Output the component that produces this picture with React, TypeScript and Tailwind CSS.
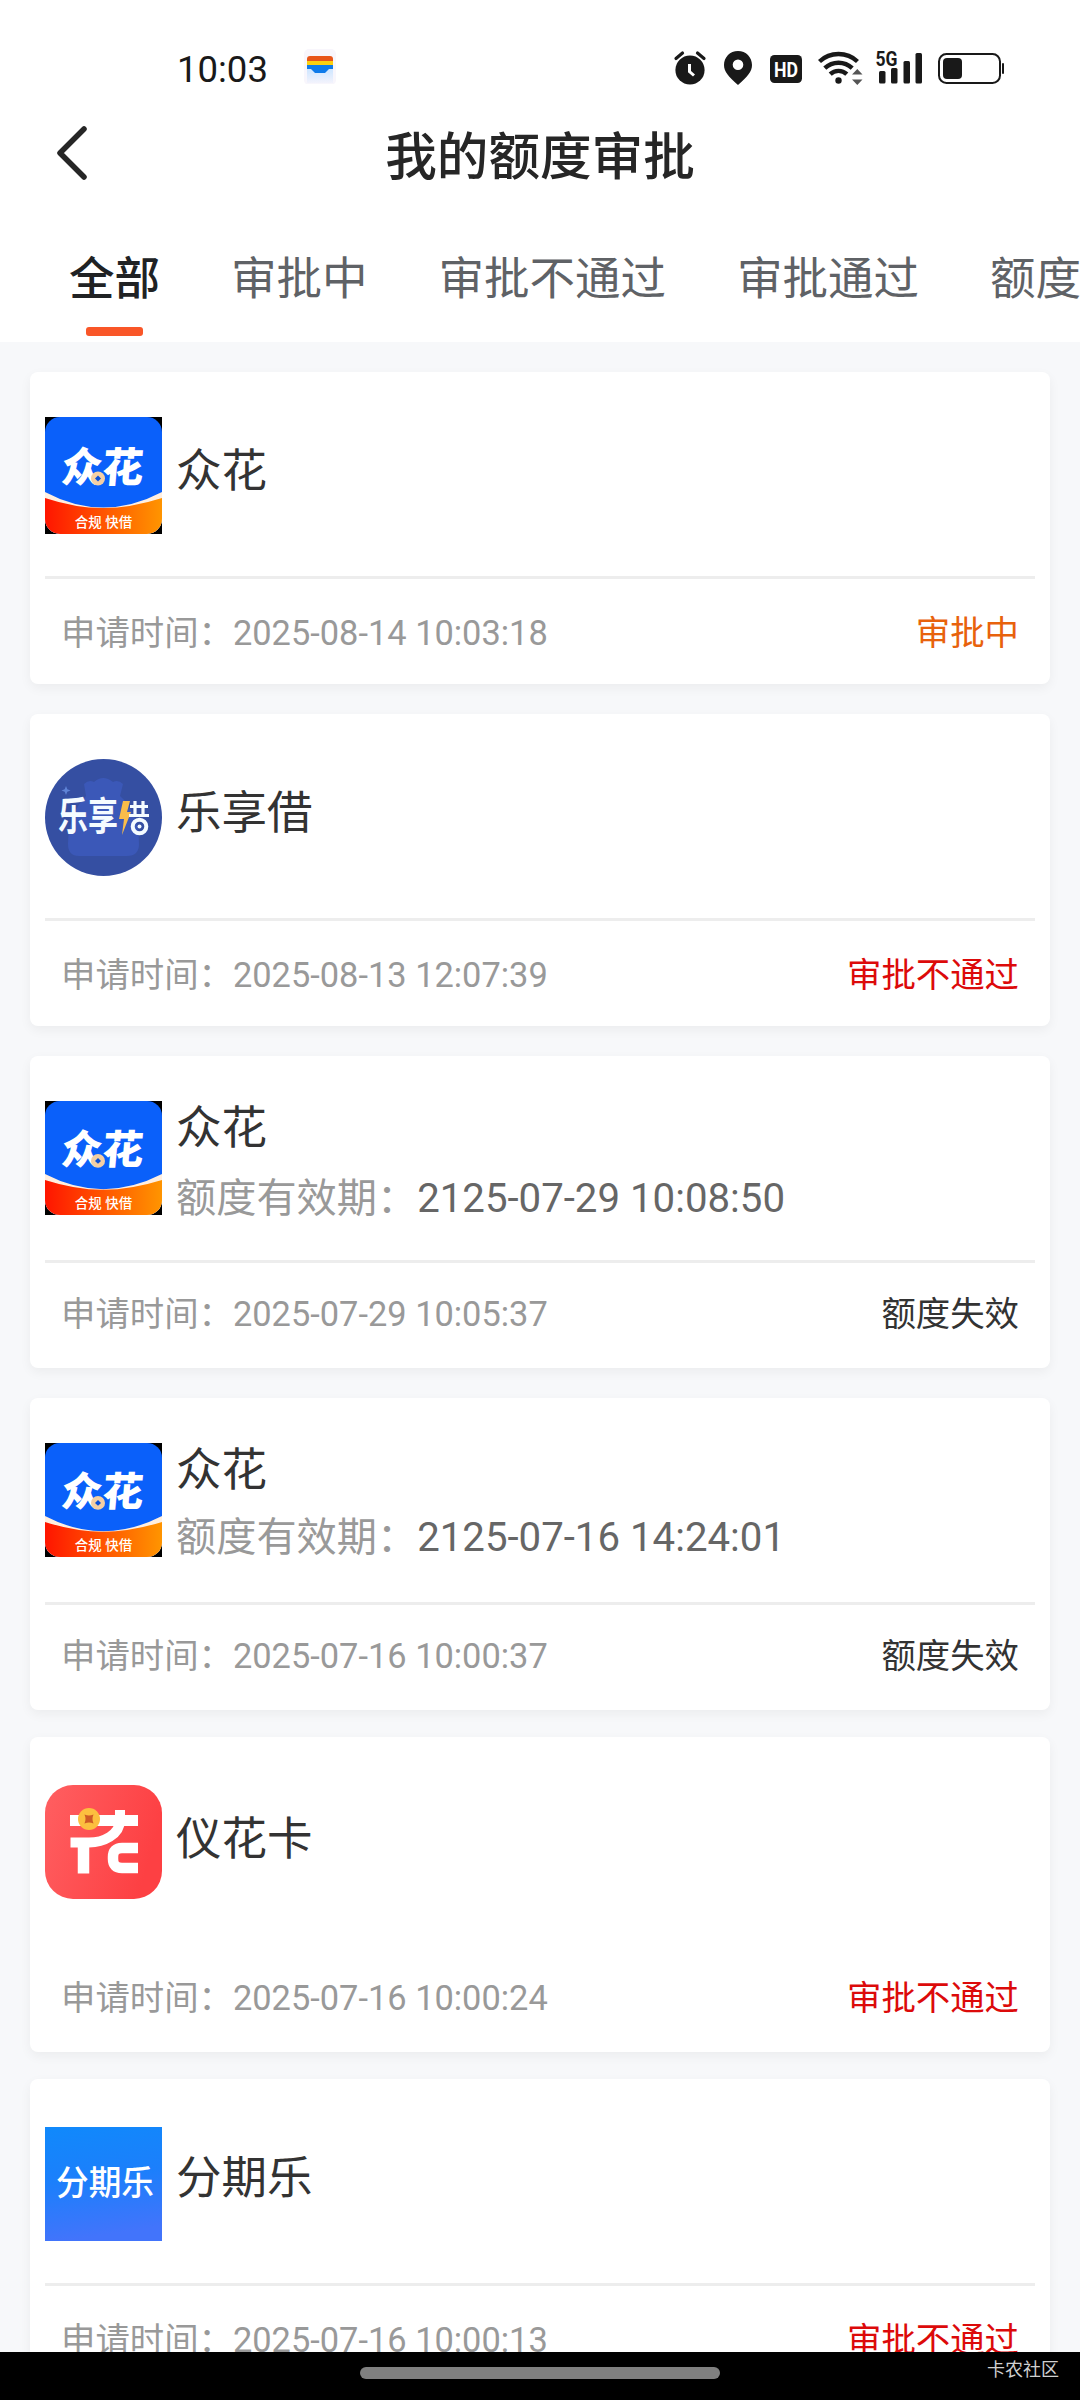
import React from 'react';
import { clsx } from 'clsx';

type LogoKind = 'zhonghua' | 'lexiang' | 'yihua' | 'fenqile';

interface Application {
  name: string;
  logo: LogoKind;
  validUntil?: string;
  appliedAt: string;
  status: string;
  statusClass: string;
  cardClass: string;
  logoClass: string;
  textClass: string;
  validClass?: string;
  dividerClass: string;
  footerClass: string;
}

const tabs = ['全部', '审批中', '审批不通过', '审批通过', '额度失效'];

const applications: Application[] = [
  {
    name: '众花',
    logo: 'zhonghua',
    appliedAt: '2025-08-14 10:03:18',
    status: '审批中',
    statusClass: 'text-[#e8620c]',
    cardClass: 'h-[312px]',
    logoClass: 'mt-[45px] h-[117px]',
    textClass: 'pt-[70px]',
    dividerClass: 'bg-[#ededed]',
    footerClass: 'pt-[29px]',
  },
  {
    name: '乐享借',
    logo: 'lexiang',
    appliedAt: '2025-08-13 12:07:39',
    status: '审批不通过',
    statusClass: 'text-[#dc0a0a]',
    cardClass: 'mt-[30px] h-[312px]',
    logoClass: 'mt-[45px] h-[117px]',
    textClass: 'pt-[70px]',
    dividerClass: 'bg-[#ededed]',
    footerClass: 'pt-[29px]',
  },
  {
    name: '众花',
    logo: 'zhonghua',
    validUntil: '2125-07-29 10:08:50',
    appliedAt: '2025-07-29 10:05:37',
    status: '额度失效',
    statusClass: 'text-[#333333]',
    cardClass: 'mt-[30px] h-[312px]',
    logoClass: 'mt-[45px] h-[114px]',
    textClass: 'pt-[43px]',
    validClass: 'mt-[15px]',
    dividerClass: 'bg-[#ededed]',
    footerClass: 'pt-[26px]',
  },
  {
    name: '众花',
    logo: 'zhonghua',
    validUntil: '2125-07-16 14:24:01',
    appliedAt: '2025-07-16 10:00:37',
    status: '额度失效',
    statusClass: 'text-[#333333]',
    cardClass: 'mt-[30px] h-[312px]',
    logoClass: 'mt-[45px] h-[114px]',
    textClass: 'pt-[43px]',
    validClass: 'mt-[12px]',
    dividerClass: 'bg-[#ededed]',
    footerClass: 'pt-[26px]',
  },
  {
    name: '仪花卡',
    logo: 'yihua',
    appliedAt: '2025-07-16 10:00:24',
    status: '审批不通过',
    statusClass: 'text-[#dc0a0a]',
    cardClass: 'mt-[27px] h-[315px] pt-[3px]',
    logoClass: 'mt-[45px] h-[114px]',
    textClass: 'pt-[70px]',
    dividerClass: 'bg-transparent',
    footerClass: 'pt-[26px]',
  },
  {
    name: '分期乐',
    logo: 'fenqile',
    appliedAt: '2025-07-16 10:00:13',
    status: '审批不通过',
    statusClass: 'text-[#dc0a0a]',
    cardClass: 'mt-[27px] h-[315px]',
    logoClass: 'mt-[48px] h-[114px]',
    textClass: 'pt-[70px]',
    dividerClass: 'bg-[#ededed]',
    footerClass: 'pt-[29px]',
  },
];

const StatusIcons = () => (
  <svg width="334" height="40" viewBox="0 0 334 40" fill="#191919">
    {/* Alarm */}
    <circle cx="20" cy="22" r="14.6" />
    <path d="M6 10.5 12.5 5M34 10.5 27.5 5" stroke="#191919" strokeWidth="3.2" strokeLinecap="round" />
    <path d="M19.5 16v7.5l4.5 4" fill="none" stroke="#fff" strokeWidth="3" />
    {/* Location */}
    <path
      fillRule="evenodd"
      d="M68 3c-8 0-14 6.2-14 14 0 6.5 4.5 11.5 14 20 9.5-8.5 14-13.5 14-20 0-7.800-6-14-14-14zm0 8.500a5.300 5.300 0 1 1 0 10.600 5.300 5.300 0 0 1 0-10.600z"
    />
    {/* HD */}
    <rect x="100" y="7" width="32" height="28" rx="4.5" />
    <text x="116" y="28.5" fill="#fff" fontSize="21" fontWeight="700" textAnchor="middle" textLength="24" lengthAdjust="spacingAndGlyphs">HD</text>
    {/* Wifi */}
    <g fill="none" stroke="#191919" strokeWidth="4.4">
      <path d="M149.5 13.500a28 28 0 0 1 38 0" />
      <path d="M154.8 20.200a20 20 0 0 1 27.400 0" />
      <path d="M160.2 26.200a12 12 0 0 1 16.600 0" />
    </g>
    <circle cx="168.5" cy="32.5" r="3.2" />
    <path d="M182 26.500h10.500l-5.200-5.500zM182 31.500h10.500l-5.200 5.500z" fill="#555" />
    {/* Signal */}
    <text x="205.5" y="18" fontSize="20.5" fontWeight="700" textLength="22" lengthAdjust="spacingAndGlyphs">5G</text>
    <rect x="209" y="23" width="6.5" height="12.5" rx="1.5" />
    <rect x="221" y="20" width="6.5" height="15.5" rx="1.5" />
    <rect x="233.5" y="13" width="6.5" height="22.5" rx="1.5" />
    <rect x="245.5" y="5" width="6.5" height="30.5" rx="1.5" />
    {/* Battery */}
    <rect x="269" y="6" width="61" height="29" rx="7.5" fill="none" stroke="#191919" strokeWidth="2" />
    <rect x="273" y="10" width="19" height="21" rx="4" />
    <rect x="332" y="15" width="2" height="11" rx="1" />
  </svg>
);

const WalletIcon = () => (
  <svg width="34" height="36" viewBox="0 0 34 36">
    <defs>
      <linearGradient id="wallet" x1="0" y1="0" x2="0" y2="1">
        <stop offset="0.3" stopColor="#d3e8ff" />
        <stop offset="1" stopColor="#f3f3fc" />
      </linearGradient>
    </defs>
    <rect x="1" y="1" width="32" height="36" rx="5" fill="#f8f6fc" />
    <path d="M4 18h26v17H4z" fill="url(#wallet)" />
    <path d="M4 13v-2a3 3 0 0 1 3-3h20a3 3 0 0 1 3 3v2z" fill="#e8561a" />
    <path d="M4 13h26v4H4z" fill="#fdd00f" />
    <path d="M4 17h26v4h-4l-4 4H12l-4-4H4z" fill="#0f7bea" />
  </svg>
);

const ZhonghuaLogo = () => (
  <svg viewBox="0 0 117 117" preserveAspectRatio="none" className="h-full w-full">
    <defs>
      <linearGradient id="zh-band" x1="0" x2="1" y1="0" y2="0">
        <stop offset="0" stopColor="#ff1500" />
        <stop offset="1" stopColor="#ff9500" />
      </linearGradient>
      <clipPath id="zh-clip">
        <rect width="117" height="117" rx="15" />
      </clipPath>
    </defs>
    <rect width="117" height="117" fill="#000" />
    <g clipPath="url(#zh-clip)">
      <rect width="117" height="117" fill="#0a60fa" />
      <path d="M0 75Q58 106 117 75V117H0z" fill="#ffefe0" />
      <path d="M0 81Q30 91 58 91T117 81V117H0z" fill="url(#zh-band)" />
    </g>
    <text x="57" y="65" fontSize="41" fontWeight="900" fill="#fff" textAnchor="middle" textLength="82" lengthAdjust="spacingAndGlyphs" transform="skewX(-5) translate(5 0)">众花</text>
    <circle cx="53" cy="61.5" r="7" fill="#f3cfa4" />
    <path d="M53 58.500l3 3-3 3-3-3z" fill="#0a50d8" />
    <text x="58.5" y="110" fontSize="13.5" fontWeight="500" fill="#fff" textAnchor="middle">合规 快借</text>
  </svg>
);

const LexiangLogo = () => (
  <svg viewBox="0 0 117 117" preserveAspectRatio="none" className="h-full w-full">
    <circle cx="58.5" cy="58.5" r="58.5" fill="#354fa2" />
    <path d="M39 25q5-5 10-2 9-8 19 0 5-3 10 2l-3 12c14 12 19 30 19 48q0 12-12 12H34q-11 0-11-12c0-18 6-36 18-48z" fill="#3b58b8" />
    <path d="M21 27l1.300 3.200 3.200 1.300-3.200 1.300L21 36l-1.300-3.200-3.200-1.300 3.200-1.300z" fill="#5f83d6" />
    <text x="13" y="54.5" fontSize="30" fontWeight="700" fill="#f4fbff" textLength="60" lengthAdjust="spacingAndGlyphs" transform="scale(1 1.3)">乐享</text>
    <path d="M78 42h7l-3 11h4L77 76l2-16h-5z" fill="#f9bd4a" />
    {/* Right half of the stylised 借 */}
    <g stroke="#f4fbff" fill="none">
      <path d="M85 47.500h18M84 56.500h20M90 42v15M98 42v15" strokeWidth="3.2" />
      <circle cx="94.5" cy="67.5" r="6.8" strokeWidth="4" />
    </g>
    <circle cx="94.5" cy="67.5" r="2" fill="#f4fbff" />
  </svg>
);

const YihuaLogo = () => (
  <svg viewBox="0 0 117 114" preserveAspectRatio="none" className="h-full w-full">
    <defs>
      <linearGradient id="yh-bg" x1="0" x2="1" y1="0" y2="0.3">
        <stop offset="0" stopColor="#ff5f61" />
        <stop offset="1" stopColor="#fd4043" />
      </linearGradient>
    </defs>
    <rect width="117" height="114" rx="28" fill="url(#yh-bg)" />
    <g fill="none" stroke="#fff">
      <path d="M25 35.500H93" strokeWidth="11" />
      <path d="M75 25v10C75 50 58 57.500 44 57.500H25.500" strokeWidth="10" />
      <path d="M38.500 58v30.500" strokeWidth="11.5" />
      <path d="M93 63H77q-9 0-9 9v2q0 9 9 9h16" strokeWidth="10.5" />
    </g>
    <circle cx="44" cy="34" r="11" fill="#fcbf3f" />
    <path d="M39.500 29.500q4.500 2 9 0-2 4.500 0 9-4.500-2-9 0 2-4.500 0-9z" fill="#ce5a25" />
  </svg>
);

const FenqileLogo = () => (
  <svg viewBox="0 0 117 114" preserveAspectRatio="none" className="h-full w-full">
    <defs>
      <linearGradient id="fq-bg" x1="0" x2="0.15" y1="0" y2="1">
        <stop offset="0" stopColor="#1089fb" />
        <stop offset="0.5" stopColor="#1c7ffb" />
        <stop offset="1" stopColor="#4274fb" />
      </linearGradient>
    </defs>
    <rect width="117" height="114" fill="url(#fq-bg)" />
    <path d="M51 47v9h6" fill="none" stroke="#b08be0" strokeWidth="3.5" />
    <text x="11" y="68" fontSize="34" fontWeight="500" fill="#fff" textLength="98" lengthAdjust="spacingAndGlyphs">分期乐</text>
  </svg>
);

const logos: Record<LogoKind, () => React.JSX.Element> = {
  zhonghua: ZhonghuaLogo,
  lexiang: LexiangLogo,
  yihua: YihuaLogo,
  fenqile: FenqileLogo,
};

const ApplicationCard = ({ item }: { item: Application }) => {
  const Logo = logos[item.logo];

  return (
    <div className={clsx('shrink-0 rounded-lg bg-white px-[15px] shadow-[0_4px_12px_rgba(0,0,0,0.05)]', item.cardClass)}>
      <div className="flex h-[204px] gap-[14px]">
        <div className={clsx('w-[117px] shrink-0', item.logoClass)}>
          <Logo />
        </div>
        <div className={clsx('flex flex-col whitespace-nowrap', item.textClass)}>
          <div className="text-[45.5px] leading-[60px] text-[#333333]">{item.name}</div>
          {item.validUntil && (
            <div className={clsx('flex text-[40.2px] leading-[50px]', item.validClass)}>
              <span className="text-[#999999]">额度有效期：</span>
              <span className="text-[#666666]">{item.validUntil}</span>
            </div>
          )}
        </div>
      </div>
      <div className={clsx('h-[3px]', item.dividerClass)} />
      <div className={clsx('flex justify-between pr-4 pl-4 text-[34.4px] leading-[50px] whitespace-nowrap', item.footerClass)}>
        <span className="text-[#999999]">申请时间：{item.appliedAt}</span>
        <span className={item.statusClass}>{item.status}</span>
      </div>
    </div>
  );
};

export default function App() {
  return (
    <div className="flex h-[2400px] w-[1080px] flex-col overflow-hidden bg-[#f7f8fa] font-[Roboto,'Noto_Sans_CJK_SC',sans-serif]">
      <header className="h-[342px] shrink-0 bg-white">
        {/* Status bar */}
        <div className="flex h-[100px] items-start pt-[48px] pr-[76px] pl-[177px]">
          <span className="w-[90px] text-[36.5px] leading-[44px] text-[#191919]">10:03</span>
          <div className="ml-[36px]">
            <WalletIcon />
          </div>
          <div className="ml-auto">
            <StatusIcons />
          </div>
        </div>

        {/* Title bar */}
        <div className="flex h-[112px] items-start px-[54px] pt-[23px]">
          <svg width="36" height="60" viewBox="0 0 36 60" fill="none" stroke="#262626" strokeWidth="5.5" strokeLinecap="round" strokeLinejoin="round">
            <path d="M30 6 6 30l24 24" />
          </svg>
          <h1 className="flex-1 pt-[5px] pr-[36px] text-center text-[51.6px] leading-[60px] font-medium text-[#262626]">我的额度审批</h1>
        </div>

        {/* Filter tabs */}
        <nav className="flex gap-[71px] overflow-hidden pt-[38px] pl-[69px] text-[45.5px] leading-[60px] whitespace-nowrap">
          {tabs.map((tab, i) => (
            <div key={tab} className="flex shrink-0 flex-col items-center">
              <span className={i === 0 ? 'font-medium text-[#202224]' : 'text-[#5f6266]'}>{tab}</span>
              {i === 0 && <div className="mt-[17px] h-[9px] w-[57px] rounded-[3px] bg-[#f95628]" />}
            </div>
          ))}
        </nav>
      </header>

      <main className="flex h-[2010px] shrink-0 flex-col overflow-hidden px-[30px] pt-[30px]">
        {applications.map((item) => (
          <ApplicationCard key={item.appliedAt} item={item} />
        ))}
      </main>

      {/* Gesture bar */}
      <footer className="grid h-12 shrink-0 grid-cols-3 items-start bg-black">
        <div />
        <div className="mt-[15px] h-3 rounded-full bg-[#808080]" />
        <span className="mt-[5px] pr-[21px] text-right text-[18px] leading-[26px] text-[#d0d0d0]">卡农社区</span>
      </footer>
    </div>
  );
}
